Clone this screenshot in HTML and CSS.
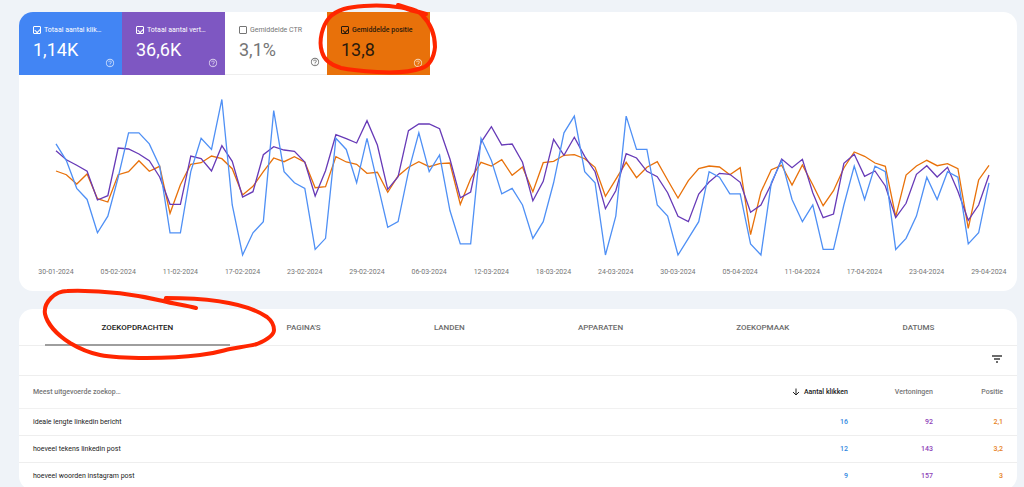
FILE: index.html
```html
<!DOCTYPE html>
<html lang="nl">
<head>
<meta charset="utf-8">
<title>Zoekprestaties</title>
<link rel="stylesheet" href="styles.css">
</head>
<body>
<svg class="defs" width="0" height="0" aria-hidden="true">
  <symbol id="help" viewBox="0 0 24 24"><path fill="currentColor" d="M11 18h2v-2h-2v2zm1-16C6.48 2 2 6.48 2 12s4.48 10 10 10 10-4.48 10-10S17.52 2 12 2zm0 18c-4.41 0-8-3.59-8-8s3.59-8 8-8 8 3.59 8 8-3.59 8-8 8zm0-14c-2.21 0-4 1.79-4 4h2c0-1.1.9-2 2-2s2 .9 2 2c0 2-3 1.75-3 5h2c0-2.25 3-2.5 3-5 0-2.21-1.79-4-4-4z"/></symbol>
</svg>
<main>
  <section class="card performance">
    <div class="metrics">
      <div class="metric clicks">
        <label class="metric-label"><input type="checkbox" checked>Totaal aantal klik…</label>
        <div class="metric-body"><span class="value">1,14K</span><button class="help" type="button" aria-label="Uitleg klikken"><svg><use href="#help"/></svg></button></div>
      </div>
      <div class="metric impressions">
        <label class="metric-label"><input type="checkbox" checked>Totaal aantal vert…</label>
        <div class="metric-body"><span class="value">36,6K</span><button class="help" type="button" aria-label="Uitleg vertoningen"><svg><use href="#help"/></svg></button></div>
      </div>
      <div class="metric ctr">
        <label class="metric-label"><input type="checkbox">Gemiddelde CTR</label>
        <div class="metric-body"><span class="value">3,1%</span><button class="help" type="button" aria-label="Uitleg CTR"><svg><use href="#help"/></svg></button></div>
      </div>
      <div class="metric position">
        <label class="metric-label"><input type="checkbox" checked>Gemiddelde positie</label>
        <div class="metric-body"><span class="value">13,8</span><button class="help" type="button" aria-label="Uitleg positie"><svg><use href="#help"/></svg></button></div>
        <svg class="mark mark-metric" viewBox="0 0 120 76" aria-hidden="true"><path d="M79 5C90 9 98 9 103 15C112 24 116 36 116 47C115 58 110 66 103 68C92 72 75 73 58 72C42 71 32 70 22 68C12 65 5 60 3 52C-1 40 4 25 10 18C18 9 30 7 45 6C70 4 90 8 107 14M79 5C85 9 98 12 107 14"/></svg>
      </div>
    </div>
    <div class="chart">
      <svg class="plot" viewBox="0 85 90 175" preserveAspectRatio="none" role="img" aria-label="Klikken, vertoningen en positie per dag">
        <polyline class="line position-line" id="position-line"/>
        <polyline class="line impressions-line" id="impressions-line"/>
        <polyline class="line clicks-line" id="clicks-line"/>
      </svg>
      <div class="dates">
        <span>30-01-2024</span><span>05-02-2024</span><span>11-02-2024</span><span>17-02-2024</span><span>23-02-2024</span><span>29-02-2024</span><span>06-03-2024</span><span>12-03-2024</span><span>18-03-2024</span><span>24-03-2024</span><span>30-03-2024</span><span>05-04-2024</span><span>11-04-2024</span><span>17-04-2024</span><span>23-04-2024</span><span>29-04-2024</span>
      </div>
    </div>
  </section>

  <section class="card queries">
    <nav class="tabs">
      <a class="active" href="#zoekopdrachten">ZOEKOPDRACHTEN</a>
      <a href="#paginas">PAGINA'S</a>
      <a href="#landen">LANDEN</a>
      <a href="#apparaten">APPARATEN</a>
      <a href="#zoekopmaak">ZOEKOPMAAK</a>
      <a href="#datums">DATUMS</a>
      <svg class="mark mark-tab" viewBox="0 0 240 76" aria-hidden="true"><path d="M158 18C147 15 136 14 125 11C95 4 60 0 29 1C22 1 17 4 13 8C8 13 6 18 7 24C9 33 18 44 32 53C42 59 52 63 62 65C82 69 132 69 162 65C180 63 186 60 192 59C203 57 211 56 219 54C231 49 236 45 236 40C236 35 234 31 229 27C207 12 165 8 128 8L127 11"/></svg>
    </nav>
    <div class="toolbar">
      <button class="filter" type="button" aria-label="Filteren"><svg viewBox="0 0 12 8"><path d="M1 1h10M3 4h6M5 7h2" stroke="currentColor" stroke-width="1.300"/></svg></button>
    </div>
    <table>
      <thead>
        <tr>
          <th class="query" scope="col">Meest uitgevoerde zoekop…</th>
          <th class="num sorted" scope="col"><svg class="arrow" viewBox="0 0 8 8"><path d="M4 .500V7M1 4l3 3 3-3" fill="none" stroke="currentColor"/></svg>Aantal klikken</th>
          <th class="num" scope="col">Vertoningen</th>
          <th class="num last" scope="col">Positie</th>
        </tr>
      </thead>
      <tbody>
        <tr><td class="query">ideale lengte linkedin bericht</td><td class="num c-clicks">16</td><td class="num c-impressions">92</td><td class="num last c-position">2,1</td></tr>
        <tr><td class="query">hoeveel tekens linkedin post</td><td class="num c-clicks">12</td><td class="num c-impressions">143</td><td class="num last c-position">3,2</td></tr>
        <tr><td class="query">hoeveel woorden instagram post</td><td class="num c-clicks">9</td><td class="num c-impressions">157</td><td class="num last c-position">3</td></tr>
      </tbody>
    </table>
  </section>
</main>
<script src="chart.js"></script>
</body>
</html>
```
FILE: styles.css
```css
* { box-sizing: border-box; }

body {
  height: 100vh;
  margin: 0;
  padding: 12px 7px 0 19px;
  overflow: hidden;
  background: #eff3f8;
  color: #3c3c3c;
  font: 7px/10px Roboto, "Liberation Sans", sans-serif;
}

main { display: flex; flex-direction: column; gap: 18px; }

button { padding: 0; border: 0; background: none; color: inherit; }
svg { display: block; }
.defs { position: absolute; }

.card { background: #fff; border-radius: 14px; }
.performance { padding-bottom: 14px; }

/* Metric tiles */
.metrics { display: flex; }

.metric {
  position: relative;
  display: flex;
  flex-direction: column;
  width: 103px;
  height: 63px;
  padding: 13px 7px 7px 14px;
}

.clicks { background: #4285f4; color: #fff; border-top-left-radius: 14px; }
.impressions { background: #7e57c2; color: #fff; }
.ctr { width: 102px; color: #757575; border-bottom: 1px solid #eee; }
.position { background: #e8710a; color: #2b1a0c; }

.metric-label { display: flex; align-items: center; gap: 3px; white-space: nowrap; }
.position .metric-label { font-weight: 500; }

.metric-label input {
  appearance: none;
  position: relative;
  flex: none;
  width: 8px;
  height: 8px;
  margin: 0;
  border: 1px solid currentColor;
  border-radius: 1px;
  color: inherit;
}

.metric-label input:checked::after {
  content: "";
  position: absolute;
  left: 1px;
  top: 1px;
  width: 4px;
  height: 3px;
  border: solid currentColor;
  border-width: 0 0 1px 1px;
  transform: rotate(-45deg);
}

.metric-body { display: flex; flex: 1; justify-content: space-between; padding-top: 3px; }
.value { font-size: 18px; line-height: 24px; }
.help { align-self: flex-end; opacity: .7; }
.ctr .help { opacity: 1; }
.help svg { width: 10px; height: 10px; }
.position .help { color: #fff; }

/* Hand-drawn highlights */
.mark {
  position: absolute;
  z-index: 1;
  overflow: visible;
  fill: none;
  stroke: #ff2600;
  stroke-width: 4px;
  stroke-linecap: round;
  stroke-linejoin: round;
  pointer-events: none;
}

.mark-metric { left: -8px; top: -12px; width: 120px; height: 76px; }
.mark-tab { left: 19px; top: -19px; width: 240px; height: 76px; }

/* Chart */
.chart { padding: 10px 28px 0 37px; }
.plot { width: 100%; height: 175px; overflow: visible; }
.line { fill: none; stroke-width: 1.3px; vector-effect: non-scaling-stroke; }
.clicks-line { stroke: #4f90f5; }
.impressions-line { stroke: #673ab7; }
.position-line { stroke: #e8710a; }

.dates { display: flex; justify-content: space-between; margin: 7px -20px 0; color: #757575; }
.dates span { width: 40px; text-align: center; }

/* Tabs */
.tabs {
  position: relative;
  display: flex;
  padding: 0 26px;
  border-bottom: 1px solid #eee;
}

.tabs a {
  flex: 1 1 auto;
  height: 37px;
  margin-bottom: -1px;
  border-bottom: 2px solid transparent;
  color: #6b6b6b;
  font-size: 8px;
  font-weight: 500;
  line-height: 37px;
  text-align: center;
  text-decoration: none;
}

.tabs .active { color: #212121; border-color: #9e9e9e; }

.toolbar {
  display: flex;
  justify-content: flex-end;
  align-items: center;
  height: 30px;
  padding: 0 14px 4px;
  border-bottom: 1px solid #eee;
}

.filter svg { width: 12px; height: 8px; }

/* Query table */
table { width: 100%; border-collapse: collapse; table-layout: fixed; }
th { height: 32px; padding: 0; border-bottom: 1px solid #f1f1f1; color: #757575; font-weight: 500; }
td { height: 27px; padding: 0; border-bottom: 1px solid #eee; }
.query { padding-left: 14px; text-align: left; }
td.query { color: #212121; }
.num { width: 85px; text-align: right; }
td.num { font-weight: 500; }
.last { width: 84px; padding-right: 14px; }
.sorted { color: #212121; }
.arrow { display: inline-block; width: 8px; height: 8px; margin-right: 4px; vertical-align: middle; }
.c-clicks { color: #2f86e0; }
.c-impressions { color: #8e3fb8; }
.c-position { color: #e67e22; }
```
FILE: chart.js
```javascript
// Daily values from 30-01-2024 to 29-04-2024.
const clicks = [20,17,12,10,4,7,14,22,22,20,16,4,4,15,21,19,28,9,0,4,6,26,15,13,12,1,3,21,19,13,21,13,5,6,15,22,15,18,8,2,2,21,17,11,12,9,3,6,13,22,25,15,13,0,7,25,19,19,9,7,0,3,6,15,14,11,11,2,0,13,17,10,6,9,1,1,9,16,10,16,15,1,3,7,14,10,15,14,2,4,13];

// Heights on the plot's vertical axis.
const impressions = [150.7,159.7,165.3,171.3,200,195.7,148,149,154,160.7,177,204.3,204.3,156,158.7,171,145.7,161.3,197,191.7,154.7,146.7,150,151.3,162,196,170.7,134.7,138.7,143,120.7,145,189.3,176.7,130.7,124,124,128.7,159,197.7,192,142.3,126.7,145,144,162.3,200.7,181.3,139.3,155.3,137.3,156.3,171.7,208.7,190.7,153.7,158,171.3,176.7,192.7,216.3,221.7,194,182,173.3,174.3,182.3,212.3,205,184,159,167.7,159.3,192.7,217.7,214,163.3,154.3,176.3,171,186,217.7,203.3,174.3,165.7,177,167.3,191.3,220.3,205,175];
const position = [171,174.7,184,174,198.7,202,174.7,171.7,160.7,171.3,166.3,213.3,184.7,164.3,162.7,156,158.7,168.7,195,186.3,171.7,158,161.7,156.7,162.3,187.7,186.7,156.7,162,164.3,173.3,172.3,192.3,176,167.3,161.7,166.7,163.7,163,204.3,178.7,162.3,166,159.7,175.3,167,191.7,162.7,161.3,155.3,154.7,158.7,167.3,196.3,179.3,162.3,177.7,167.3,161.7,180,198,180.7,168.7,166,167,174.7,167.7,234.7,192,169.7,165.3,185,165,184.7,205.7,190.7,168,152,156.3,163,166.3,216.7,175,166,160.3,165.7,163.7,168.7,228.3,180,165.3];

const draw = (id, heights) =>
  document.getElementById(id).setAttribute("points", heights.map((y, day) => `${day},${y}`).join(" "));

draw("clicks-line", clicks.map(count => 255 - count * 5.555));
draw("impressions-line", impressions);
draw("position-line", position);
```
